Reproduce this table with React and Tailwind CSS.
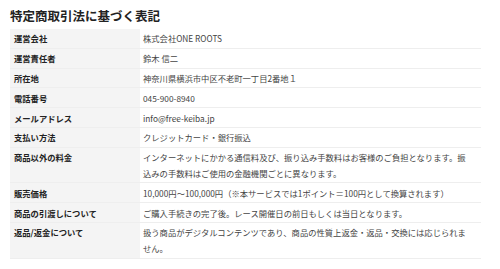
const rows = [
    { label: "運営会社", value: "株式会社ONE ROOTS" },
    { label: "運営責任者", value: "鈴木 信二" },
    { label: "所在地", value: "神奈川県横浜市中区不老町一丁目2番地１" },
    { label: "電話番号", value: "045-900-8940" },
    { label: "メールアドレス", value: "info@free-keiba.jp" },
    { label: "支払い方法", value: "クレジットカード・銀行振込" },
    {
        label: "商品以外の料金",
        value: "インターネットにかかる通信料及び、振り込み手数料はお客様のご負担となります。振込みの手数料はご使用の金融機関ごとに異なります。",
    },
    { label: "販売価格", value: "10,000円～100,000円（※本サービスでは1ポイント＝100円として換算されます）" },
    { label: "商品の引渡しについて", value: "ご購入手続きの完了後。レース開催日の前日もしくは当日となります。" },
    {
        label: "返品/返金について",
        value: "扱う商品がデジタルコンテンツであり、商品の性質上返金・返品・交換には応じられません。",
    },
];

const App = () => {
    return (
        <div className="min-h-screen bg-white font-['Noto_Sans_CJK_JP','Noto_Sans',sans-serif]">
            <div className="w-[471px] pl-[10px] pt-[8px]">
                <h2 className="mb-[5px] text-[12.5px] font-bold leading-[16px] text-[#222]">特定商取引法に基づく表記</h2>

                <table className="w-[471px] table-fixed border-collapse text-[8.3px] leading-[16px]">
                    <tbody>
                        {rows.map((row) => (
                            <tr key={row.label} className="border-b border-[#eeeeee]">
                                <th className="w-[130px] bg-[#f4f4f4] py-[1.4px] pl-[4px] text-left align-top font-bold text-[#222]">
                                    {row.label}
                                </th>
                                <td className="py-[1.4px] pl-[3px] pr-[8px] align-top text-[#444]">{row.value}</td>
                            </tr>
                        ))}
                    </tbody>
                </table>
            </div>
        </div>
    );
};

export default App;
